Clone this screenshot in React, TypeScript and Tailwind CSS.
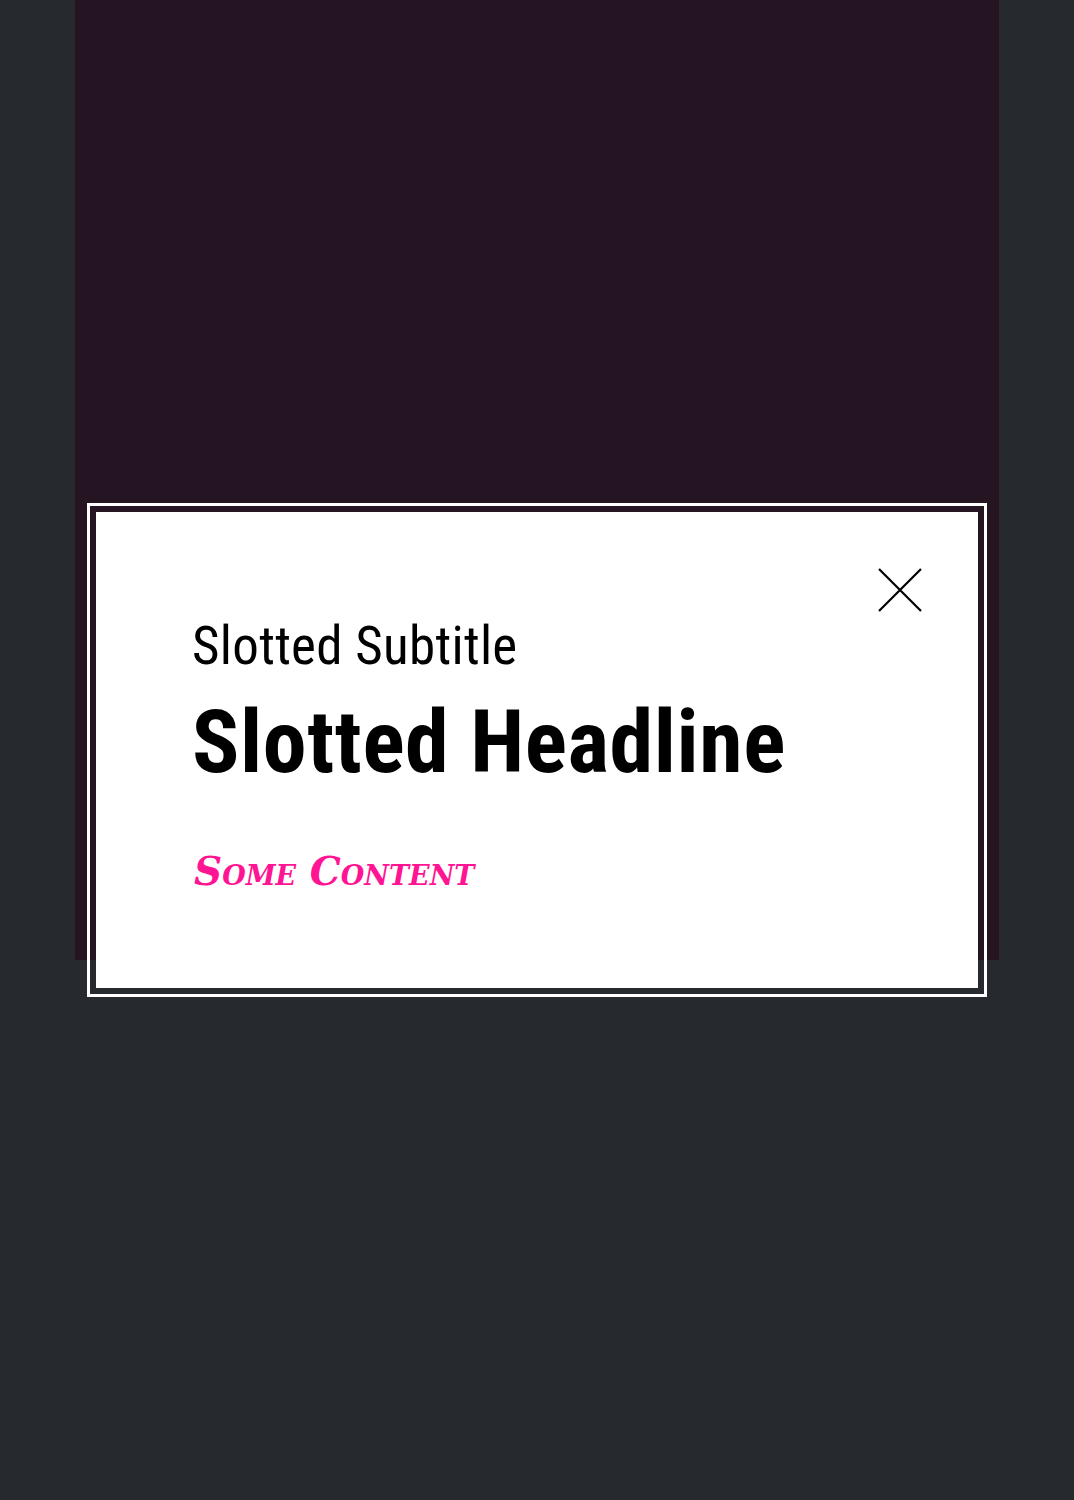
import React from "react";

export default function App() {
  return (
    <div className="relative min-h-[1500px] bg-[#262a2e]">
      <div className="mx-auto h-[960px] w-[924px] bg-[#251422]" />
      <div className="fixed inset-0 flex items-center justify-center">
        <div className="relative h-[476px] w-[882px] bg-white pl-[96px] pr-[96px] pt-[108px] outline-[3px] outline-offset-[6px] outline-white outline-solid">
          <button type="button" aria-label="Close" className="absolute right-[56px] top-[56px] h-[44px] w-[44px] p-0">
            <svg width="44" height="44" viewBox="0 0 44 44" fill="none">
              <path d="M1 1 L43 43 M43 1 L1 43" stroke="#000" strokeWidth="2.2" />
            </svg>
          </button>
          <div
            className="text-[53px] leading-none tracking-[0.3px] text-black"
            style={{ fontFamily: "'Roboto', sans-serif", fontStretch: "condensed" }}
          >
            Slotted Subtitle
          </div>
          <div
            className="mt-[25px] text-[88px] font-bold leading-none tracking-[0.6px] text-black"
            style={{ fontFamily: "'Roboto', sans-serif", fontStretch: "condensed" }}
          >
            Slotted Headline
          </div>
          <div
            className="ml-[2px] mt-[66px] text-[39px] font-bold italic leading-none text-[#ff1493] [font-variant:small-caps]"
            style={{ fontFamily: "'DejaVu Serif', serif" }}
          >
            Some Content
          </div>
        </div>
      </div>
    </div>
  );
}
